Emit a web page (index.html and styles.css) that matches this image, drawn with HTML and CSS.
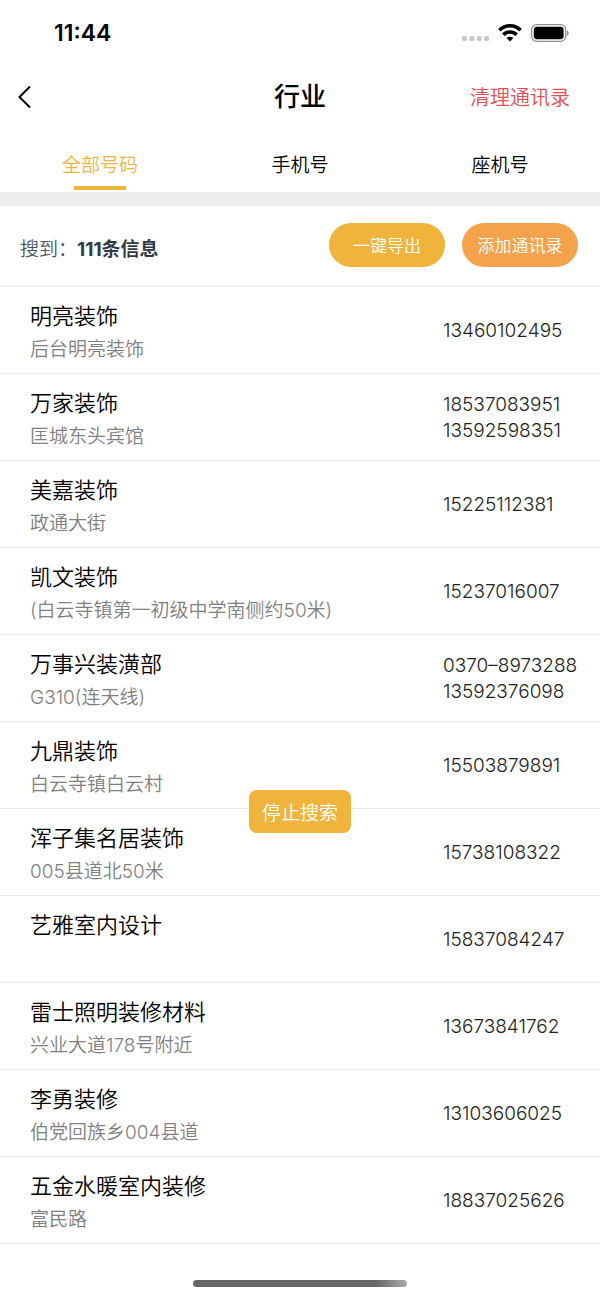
FILE: index.html
```html
<!DOCTYPE html>
<html lang="zh-CN">
<head>
	<meta charset="UTF-8">
	<meta name="viewport" content="width=device-width, initial-scale=1">
	<title>行业</title>
	<link rel="stylesheet" href="styles.css">
</head>
<body>
	<div class="status-bar">
		<span class="time">11:44</span>
		<div class="status-icons">
			<svg class="signal" width="28" height="22" viewBox="0 0 28 22">
				<g fill="#c8c8c8">
					<rect x="0" y="14" width="5" height="5" rx="1.5"/>
					<rect x="7.4" y="14" width="5" height="5" rx="1.5"/>
					<rect x="14.7" y="14" width="5" height="5" rx="1.5"/>
					<rect x="22" y="14" width="5" height="5" rx="1.5"/>
				</g>
			</svg>
			<svg class="wifi" width="24" height="22" viewBox="0 0 24 22">
				<g fill="none" stroke="#000" stroke-width="3.6">
					<path d="M1.4 8.3C7.4 2.3 16.6 2.3 22.6 8.3"/>
					<path d="M5.4 12.7C9.1 9 14.9 9 18.6 12.7"/>
				</g>
				<path d="M12 19.4L8.7 16.1C10.6 14.4 13.4 14.4 15.3 16.1Z"/>
			</svg>
			<svg class="battery" width="39" height="22" viewBox="0 0 39 22">
				<rect x="1.7" y="2.7" width="34" height="16.6" rx="5" fill="none" stroke="#8e8e8e" stroke-width="1.3"/>
				<rect x="3.8" y="4.8" width="29.8" height="12.4" rx="3.2"/>
				<path d="M37 8.3C39.2 9.3 39.2 12.7 37 13.7Z" fill="#8e8e8e"/>
			</svg>
		</div>
	</div>

	<header class="nav">
		<button class="back" type="button" aria-label="返回">
			<svg width="14" height="24" viewBox="0 0 14 24">
				<path d="M12 2.5L1.5 13L12 23.5" fill="none" stroke="#000" stroke-width="2"/>
			</svg>
		</button>
		<h1>行业</h1>
		<button class="clear" type="button">清理通讯录</button>
	</header>

	<nav class="tabs">
		<a class="tab active" href="#all">全部号码</a>
		<a class="tab" href="#mobile">手机号</a>
		<a class="tab" href="#landline">座机号</a>
	</nav>

	<section class="summary">
		<p>搜到：<strong>111条信息</strong></p>
		<div class="actions">
			<button class="pill export" type="button">一键导出</button>
			<button class="pill add" type="button">添加通讯录</button>
		</div>
	</section>

	<ul class="list">
		<li>
			<div class="info"><h2>明亮装饰</h2><p>后台明亮装饰</p></div>
			<div class="phones"><span>13460102495</span></div>
		</li>
		<li>
			<div class="info"><h2>万家装饰</h2><p>匡城东头宾馆</p></div>
			<div class="phones"><span>18537083951</span><span>13592598351</span></div>
		</li>
		<li>
			<div class="info"><h2>美嘉装饰</h2><p>政通大街</p></div>
			<div class="phones"><span>15225112381</span></div>
		</li>
		<li>
			<div class="info"><h2>凯文装饰</h2><p>(白云寺镇第一初级中学南侧约50米)</p></div>
			<div class="phones"><span>15237016007</span></div>
		</li>
		<li>
			<div class="info"><h2>万事兴装潢部</h2><p>G310(连天线)</p></div>
			<div class="phones"><span>0370–8973288</span><span>13592376098</span></div>
		</li>
		<li>
			<div class="info"><h2>九鼎装饰</h2><p>白云寺镇白云村</p></div>
			<div class="phones"><span>15503879891</span></div>
		</li>
		<li>
			<div class="info"><h2>浑子集名居装饰</h2><p>005县道北50米</p></div>
			<div class="phones"><span>15738108322</span></div>
		</li>
		<li>
			<div class="info"><h2>艺雅室内设计</h2><p></p></div>
			<div class="phones"><span>15837084247</span></div>
		</li>
		<li>
			<div class="info"><h2>雷士照明装修材料</h2><p>兴业大道178号附近</p></div>
			<div class="phones"><span>13673841762</span></div>
		</li>
		<li>
			<div class="info"><h2>李勇装修</h2><p>伯党回族乡004县道</p></div>
			<div class="phones"><span>13103606025</span></div>
		</li>
		<li>
			<div class="info"><h2>五金水暖室内装修</h2><p>富民路</p></div>
			<div class="phones"><span>18837025626</span></div>
		</li>
	</ul>

	<div class="home"><div class="home-bar"></div></div>

	<button class="stop" type="button">停止搜索</button>
</body>
</html>
```
FILE: styles.css
```css
* {
	box-sizing: border-box;
	margin: 0;
	padding: 0;
}
body {
	position: relative;
	background: #fff;
	color: #000;
	font-family: Inter, "Noto Sans CJK SC", sans-serif;
	font-size: 19px;
	font-weight: 350;
}
button {
	border: none;
	background: none;
	font-family: inherit;
	font-weight: inherit;
	cursor: pointer;
}

/* status bar */
.status-bar {
	display: flex;
	justify-content: space-between;
	align-items: center;
	height: 66px;
	padding: 0 31px 0 54px;
}
.time {
	font-size: 23px;
	font-weight: 600;
}
.status-icons {
	display: flex;
	gap: 8px;
}

/* title */
.nav {
	display: grid;
	grid-template-columns: 1fr auto 1fr;
	align-items: center;
	height: 62px;
	padding: 0 30px 2px 18px;
}
.nav h1 {
	padding: 2px 0 0 12px;
	font-size: 26px;
	font-weight: 500;
	line-height: 40px;
}
.back {
	justify-self: start;
	display: flex;
}
.clear {
	justify-self: end;
	color: #e64f54;
	font-size: 20px;
}

/* tabs */
.tabs {
	display: flex;
	height: 78px;
	border-bottom: 14px solid #eee;
}
.tab {
	position: relative;
	flex: 1;
	padding-top: 2px;
	color: #000;
	line-height: 72px;
	text-align: center;
	text-decoration: none;
}
.tab.active {
	color: #f0b43c;
}
.tab.active::after {
	content: "";
	position: absolute;
	left: 50%;
	bottom: 2px;
	width: 52px;
	height: 4px;
	margin-left: -26px;
	background: #f0b43c;
}

/* summary */
.summary {
	display: flex;
	justify-content: space-between;
	align-items: center;
	height: 81px;
	padding: 0 22px 2px 20px;
	border-bottom: 1px solid #ebebeb;
	color: #4b5562;
}
.summary p {
	padding-top: 4px;
}
.summary strong {
	color: #303a46;
	font-weight: 700;
}
.actions {
	display: flex;
	gap: 17px;
}
.pill {
	width: 116px;
	height: 44px;
	padding-bottom: 2px;
	border-radius: 22px;
	color: #fff;
	font-size: 17px;
}
.export {
	background: #f0b43c;
}
.add {
	background: #f5a24d;
}

/* list */
.list {
	list-style: none;
}
.list li {
	display: flex;
	align-items: center;
	height: 87px;
	padding: 2px 0 0 30px;
	border-bottom: 1px solid #e9e9ee;
}
.info {
	flex: 1;
	padding-top: 4px;
}
.info h2 {
	font-size: 22px;
	font-weight: inherit;
	line-height: 34px;
}
.info p {
	height: 34px;
	color: #808080;
	line-height: 34px;
}
.phones {
	display: flex;
	flex-direction: column;
	width: 157px;
	color: #222;
	font-size: 19px;
	font-weight: 300;
	line-height: 26px;
}

.home {
	padding: 36px 0 12px;
}
.home-bar {
	width: 214px;
	height: 7px;
	margin: 0 auto;
	border-radius: 4px;
	background: linear-gradient(to right, #666 85%, #aaa);
}

/* floats over the list */
.stop {
	position: absolute;
	top: 790px;
	left: 50%;
	width: 102px;
	height: 43px;
	margin-left: -51px;
	border-radius: 8px;
	background: #f0b43c;
	color: #fff;
	font-size: 19px;
}
```
